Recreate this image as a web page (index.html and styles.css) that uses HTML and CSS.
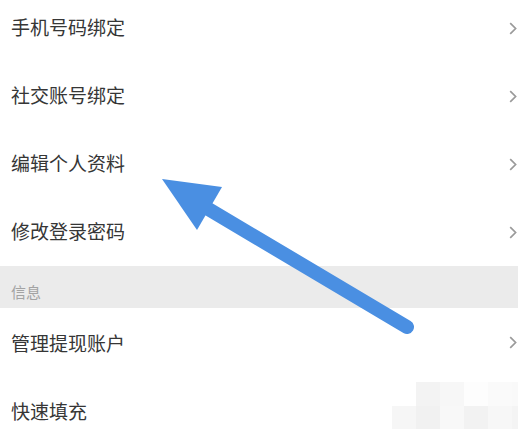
FILE: index.html
```html
<!DOCTYPE html>
<html lang="zh">
<head>
<meta charset="utf-8">
<link rel="stylesheet" href="styles.css">
</head>
<body>
<div class="page">
  <ul class="list">
    <li class="row row-top"><span class="label">手机号码绑定</span><span class="chev"><svg viewBox="0 0 8 13" width="8" height="13"><path d="M1.2 1.2 L6.6 6.5 L1.2 11.8" fill="none" stroke="#9a9a9a" stroke-width="1.7"/></svg></span></li>
    <li class="row row-top"><span class="label">社交账号绑定</span><span class="chev"><svg viewBox="0 0 8 13" width="8" height="13"><path d="M1.2 1.2 L6.6 6.5 L1.2 11.8" fill="none" stroke="#9a9a9a" stroke-width="1.7"/></svg></span></li>
    <li class="row row-top"><span class="label">编辑个人资料</span><span class="chev"><svg viewBox="0 0 8 13" width="8" height="13"><path d="M1.2 1.2 L6.6 6.5 L1.2 11.8" fill="none" stroke="#9a9a9a" stroke-width="1.7"/></svg></span></li>
    <li class="row row-top"><span class="label">修改登录密码</span><span class="chev"><svg viewBox="0 0 8 13" width="8" height="13"><path d="M1.2 1.2 L6.6 6.5 L1.2 11.8" fill="none" stroke="#9a9a9a" stroke-width="1.7"/></svg></span></li>
    <li class="section">信息</li>
    <li class="row"><span class="label">管理提现账户</span><span class="chev"><svg viewBox="0 0 8 13" width="8" height="13"><path d="M1.2 1.2 L6.6 6.5 L1.2 11.8" fill="none" stroke="#9a9a9a" stroke-width="1.7"/></svg></span></li>
    <li class="row"><span class="label">快速填充</span></li>
  </ul>

  <div class="mosaic">
    <div class="mrow mrow1">
      <span style="background:#f3f3f3"></span><span style="background:#f7f7f7"></span><span style="background:#fdfdfd"></span><span style="background:#fafafa"></span><span style="background:#f9f9f9"></span>
    </div>
    <div class="mrow mrow2">
      <span style="background:#f6f6f6"></span><span style="background:#f1f1f1"></span><span style="background:#f8f8f8"></span><span style="background:#f2f2f2"></span><span style="background:#f7f7f7"></span><span style="background:#f4f4f4"></span>
    </div>
  </div>

  <svg class="arrow" width="518" height="429" viewBox="0 0 518 429">
    <line x1="205" y1="207" x2="407" y2="327" stroke="#4a8fe2" stroke-width="14" stroke-linecap="round"/>
    <polygon points="162,179 222,187 197,230" fill="#4a8fe2"/>
  </svg>
</div>
</body>
</html>
```

FILE: styles.css
```css
html, body {
  margin: 0;
  padding: 0;
  background: #ffffff;
}

body {
  font-family: "Noto Sans CJK SC", "Noto Sans", sans-serif;
  width: 518px;
  height: 429px;
  overflow: hidden;
}

.page {
  position: relative;
  width: 518px;
  height: 429px;
  overflow: hidden;
}

.list {
  list-style: none;
  margin: -6px 0 0 0;
  padding: 0;
}

.row {
  height: 68px;
  display: flex;
  align-items: center;
  justify-content: space-between;
  padding: 0 1px 0 11px;
  box-sizing: border-box;
}

.row-top .label {
  margin-bottom: 4px;
}

.label {
  font-size: 19px;
  color: #363636;
  letter-spacing: 0;
}

.chev {
  display: flex;
  align-items: center;
}

.section {
  height: 42px;
  background: #ebebeb;
  color: #a3a3a3;
  font-size: 15px;
  padding: 15px 0 0 11px;
  box-sizing: border-box;
  line-height: 22px;
}

.mosaic {
  position: absolute;
  left: 392px;
  top: 382px;
  width: 126px;
}

.mrow {
  display: flex;
  height: 24px;
}

.mrow1 {
  padding-left: 24px;
}

.mrow span {
  width: 24px;
  height: 24px;
  flex: none;
}

.arrow {
  position: absolute;
  left: 0;
  top: 0;
}
```
